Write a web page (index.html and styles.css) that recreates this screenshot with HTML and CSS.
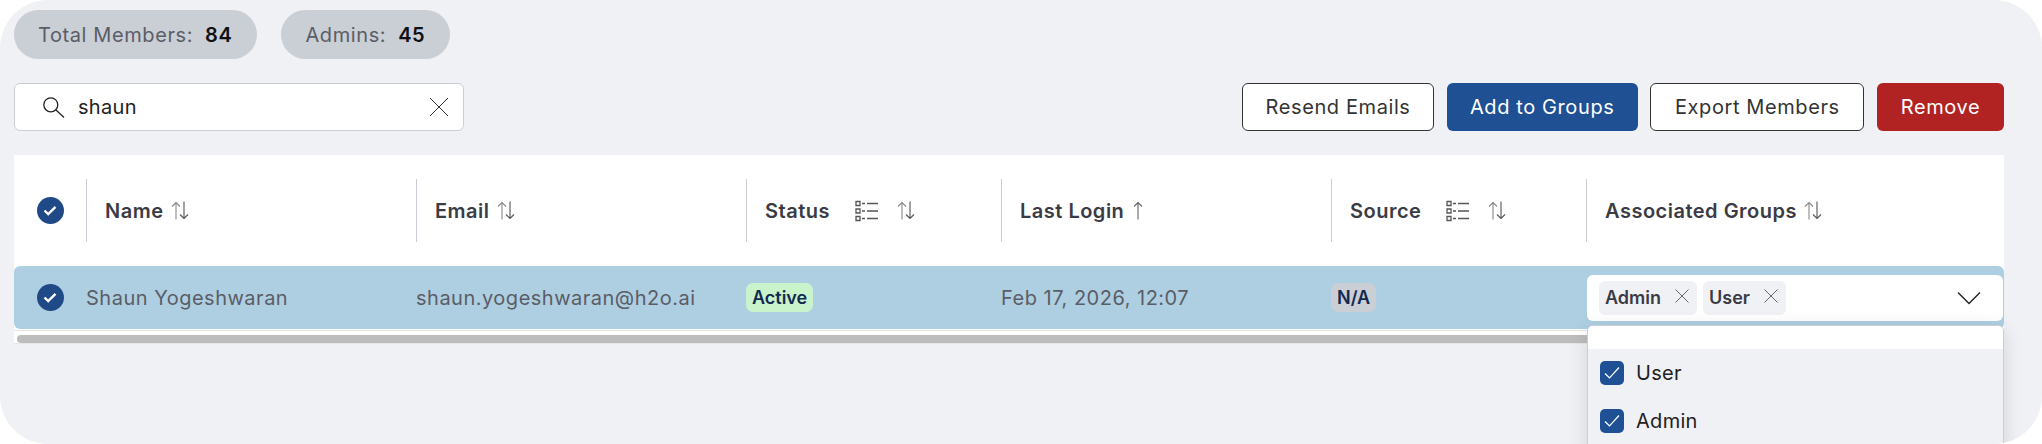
FILE: index.html
```html
<!DOCTYPE html>
<html>
<head>
    <meta charset="UTF-8">
    <title>Members</title>
    <link rel="stylesheet" href="styles.css">
</head>
<body>
    <div class="page">
        <!-- Counts -->
        <div class="stats">
            <div class="stat">Total Members: <b>84</b></div>
            <div class="stat">Admins: <b>45</b></div>
        </div>

        <!-- Search and actions -->
        <div class="toolbar">
            <div class="search">
                <svg class="search-icon" width="22" height="21" viewBox="0 0 22 21" fill="none" stroke="#222" stroke-width="1.3"><circle cx="7.8" cy="7.8" r="7"/><path d="M12.8 12.8 L21 20.5"/></svg>
                <span class="search-text">shaun</span>
                <svg width="20" height="20" viewBox="0 0 20 20" fill="none" stroke="#333" stroke-width="1"><path d="M1 1 L19 19 M19 1 L1 19"/></svg>
            </div>
            <div class="actions">
                <a class="btn btn-outline btn-resend">Resend Emails</a>
                <a class="btn btn-blue btn-add">Add to Groups</a>
                <a class="btn btn-outline btn-export">Export Members</a>
                <a class="btn btn-red btn-remove">Remove</a>
            </div>
        </div>

        <!-- Table -->
        <div class="table">
            <div class="head">
                <div class="cell check-cell">
                    <span class="round-check"><svg width="14" height="11" viewBox="0 0 14 11" fill="none" stroke="#fff" stroke-width="2.4"><path d="M1.5 5.5 L5.2 9 L12.5 1.8"/></svg></span>
                </div>
                <div class="cell head-cell">Name <svg class="sort" width="18" height="19" viewBox="0 0 18 19" fill="none" stroke-width="1.1"><path stroke="#888" d="M5 18.5 V1.5 M1 5.5 L5 1.5 L9 5.5"/><path stroke="#555" d="M13 0.5 V17.5 M9 13.5 L13 17.5 L17 13.5"/></svg></div>
                <div class="cell head-cell">Email <svg class="sort" width="18" height="19" viewBox="0 0 18 19" fill="none" stroke-width="1.1"><path stroke="#888" d="M5 18.5 V1.5 M1 5.5 L5 1.5 L9 5.5"/><path stroke="#555" d="M13 0.5 V17.5 M9 13.5 L13 17.5 L17 13.5"/></svg></div>
                <div class="cell head-cell">Status
                    <svg class="filter" width="24" height="22" viewBox="0 0 24 22" fill="none" stroke="#555" stroke-width="1.3"><path d="M1 1.5 H5 V5.5 H1 Z M1 9 H5 V13 H1 Z M1 16.5 H5 V20.5 H1 Z M7 3.5 H10 M12 3.5 H23 M7 11 H10 M12 11 H23 M7 18.5 H10 M12 18.5 H23"/></svg>
                    <svg class="sort sort-far" width="18" height="19" viewBox="0 0 18 19" fill="none" stroke-width="1.1"><path stroke="#888" d="M5 18.5 V1.5 M1 5.5 L5 1.5 L9 5.5"/><path stroke="#555" d="M13 0.5 V17.5 M9 13.5 L13 17.5 L17 13.5"/></svg>
                </div>
                <div class="cell head-cell">Last Login <svg class="sort sort-single" width="10" height="19" viewBox="0 0 10 19" fill="none" stroke="#666" stroke-width="1.1"><path d="M5 18.5 V1.5 M1 5.5 L5 1.5 L9 5.5"/></svg></div>
                <div class="cell head-cell">Source
                    <svg class="filter" width="24" height="22" viewBox="0 0 24 22" fill="none" stroke="#555" stroke-width="1.3"><path d="M1 1.5 H5 V5.5 H1 Z M1 9 H5 V13 H1 Z M1 16.5 H5 V20.5 H1 Z M7 3.5 H10 M12 3.5 H23 M7 11 H10 M12 11 H23 M7 18.5 H10 M12 18.5 H23"/></svg>
                    <svg class="sort sort-far" width="18" height="19" viewBox="0 0 18 19" fill="none" stroke-width="1.1"><path stroke="#888" d="M5 18.5 V1.5 M1 5.5 L5 1.5 L9 5.5"/><path stroke="#555" d="M13 0.5 V17.5 M9 13.5 L13 17.5 L17 13.5"/></svg>
                </div>
                <div class="cell head-cell">Associated Groups <svg class="sort" width="18" height="19" viewBox="0 0 18 19" fill="none" stroke-width="1.1"><path stroke="#888" d="M5 18.5 V1.5 M1 5.5 L5 1.5 L9 5.5"/><path stroke="#555" d="M13 0.5 V17.5 M9 13.5 L13 17.5 L17 13.5"/></svg></div>
            </div>
            <div class="row">
                <div class="cell check-cell">
                    <span class="round-check"><svg width="14" height="11" viewBox="0 0 14 11" fill="none" stroke="#fff" stroke-width="2.4"><path d="M1.5 5.5 L5.2 9 L12.5 1.8"/></svg></span>
                </div>
                <div class="cell">Shaun Yogeshwaran</div>
                <div class="cell">shaun.yogeshwaran@h2o.ai</div>
                <div class="cell badge-cell"><span class="badge badge-green">Active</span></div>
                <div class="cell">Feb 17, 2026, 12:07</div>
                <div class="cell badge-cell"><span class="badge badge-gray">N/A</span></div>
                <div class="cell groups-cell">
                    <div class="select">
                        <span class="tag">Admin <svg width="14" height="14" viewBox="0 0 14 14" fill="none" stroke="#666" stroke-width="1"><path d="M0.5 0.5 L13.5 13.5 M13.5 0.5 L0.5 13.5"/></svg></span>
                        <span class="tag">User <svg width="14" height="14" viewBox="0 0 14 14" fill="none" stroke="#666" stroke-width="1"><path d="M0.5 0.5 L13.5 13.5 M13.5 0.5 L0.5 13.5"/></svg></span>
                        <svg class="chevron" width="24" height="14" viewBox="0 0 24 14" fill="none" stroke="#222" stroke-width="1.4"><path d="M1 1.5 L12 12.5 L23 1.5"/></svg>
                    </div>
                    <div class="dropdown">
                        <div class="dropdown-search"></div>
                        <div class="dropdown-list">
                            <div class="option"><span class="box"><svg width="16" height="14" viewBox="0 0 16 14" fill="none" stroke="#fff" stroke-width="1.2"><path d="M1 7.5 L5.5 12 L15 1.5"/></svg></span>User</div>
                            <div class="option"><span class="box"><svg width="16" height="14" viewBox="0 0 16 14" fill="none" stroke="#fff" stroke-width="1.2"><path d="M1 7.5 L5.5 12 L15 1.5"/></svg></span>Admin</div>
                        </div>
                    </div>
                </div>
            </div>
            <div class="scrollbar"><div class="thumb"></div></div>
        </div>
    </div>
</body>
</html>
```

FILE: styles.css
```css
body {
    margin: 0;
    padding: 0;
    background-color: #fff;
    font-family: Inter, Arial, sans-serif;
    letter-spacing: 0.5px;
    overflow: hidden;
}

.page {
    height: 444px;
    box-sizing: border-box;
    padding: 10px 38px 0 14px;
    background-color: #f0f1f5;
    border-radius: 48px;
    overflow: hidden;
}

.stats {
    display: flex;
    gap: 24px;
}

.stat {
    height: 49px;
    padding: 0 25px 0 24px;
    display: flex;
    align-items: center;
    gap: 12px;
    background-color: #caced5;
    border-radius: 25px;
    color: #5b5d66;
    font-size: 20px;
    letter-spacing: 0.6px;
}

.stat b {
    color: #111;
    font-weight: 600;
}

.toolbar {
    display: flex;
    justify-content: space-between;
    margin-top: 24px;
}

.search {
    width: 450px;
    height: 48px;
    box-sizing: border-box;
    display: flex;
    align-items: center;
    padding: 0 14px 0 28px;
    background-color: #fff;
    border: 1px solid #c9ced6;
    border-radius: 6px;
    font-size: 20px;
    color: #222;
}

.search-text {
    flex: 1;
    margin-left: 13px;
    letter-spacing: 0.3px;
}

.actions {
    display: flex;
    gap: 12.67px;
}

.btn {
    height: 48px;
    box-sizing: border-box;
    display: flex;
    align-items: center;
    justify-content: center;
    border-radius: 6px;
    font-size: 20px;
    letter-spacing: 0.6px;
    color: #fff;
}

.btn-outline {
    background-color: #fff;
    border: 1px solid #333;
    color: #333;
}

.btn-blue {
    background-color: #1f5093;
}

.btn-red {
    background-color: #b12222;
}

.btn-resend { width: 192px; }
.btn-add { width: 191px; }
.btn-export { width: 214px; }
.btn-remove { width: 127px; }

.table {
    margin-top: 24px;
    background-color: #fff;
}

.head, .row {
    display: grid;
    grid-template-columns: 72px 330px 330px 255px 330px 255px 418px;
}

.head {
    height: 111px;
    padding-top: 24px;
    box-sizing: border-box;
    align-items: start;
}

.row {
    height: 63px;
    background-color: #aecfe2;
    border-radius: 6px;
    color: #5b5d66;
    font-size: 20px;
}

.cell {
    display: flex;
    align-items: center;
    min-width: 0;
    height: 63px;
    white-space: nowrap;
}

.head-cell {
    padding-left: 18px;
    border-left: 1px solid #c9ced6;
    color: #3a3b44;
    font-size: 20px;
    font-weight: 600;
}

.check-cell {
    justify-content: center;
}

.round-check {
    width: 27px;
    height: 27px;
    display: flex;
    align-items: center;
    justify-content: center;
    background-color: #1f4a87;
    border-radius: 50%;
}

.sort {
    margin-left: 7px;
}

.sort-single {
    margin-left: 9px;
}

.filter {
    margin-left: 25px;
}

.sort-far {
    margin-left: 18px;
}

.badge {
    padding: 4px 6px;
    border-radius: 7px;
    color: #12294f;
    font-size: 18px;
    font-weight: 600;
    letter-spacing: 0;
}

.badge-green {
    background-color: #c9f3cb;
}

.badge-gray {
    background-color: #caced5;
}

.groups-cell {
    position: relative;
}

.select {
    width: 416px;
    height: 46px;
    margin-left: 1px;
    box-sizing: border-box;
    display: flex;
    align-items: center;
    gap: 6px;
    padding: 0 22px 0 12px;
    background-color: #fff;
    border-radius: 6px;
}

.tag {
    height: 34px;
    display: flex;
    align-items: center;
    gap: 14px;
    padding: 0 8px 0 6px;
    background-color: #f0f1f5;
    border-radius: 6px;
    color: #3a3b44;
    font-size: 18px;
    font-weight: 600;
    letter-spacing: 0;
}

.tag svg {
    margin-bottom: 4px;
}

.chevron {
    margin-left: auto;
}

.dropdown {
    position: absolute;
    left: 1px;
    top: 59px;
    width: 417px;
    box-sizing: border-box;
    background-color: #f0f1f5;
    border: 1px solid #c9ced6;
    border-radius: 6px;
    box-shadow: 0 4px 20px rgba(0, 0, 0, 0.12);
    overflow: hidden;
}

.dropdown-search {
    height: 23px;
    background-color: #fff;
}

.dropdown-list {
    padding: 0 12px 20px;
}

.option {
    height: 48px;
    display: flex;
    align-items: center;
    gap: 12px;
    color: #222;
    font-size: 20px;
    letter-spacing: 0.3px;
}

.box {
    width: 24px;
    height: 24px;
    display: flex;
    align-items: center;
    justify-content: center;
    background-color: #1f5093;
    border-radius: 5px;
}

.scrollbar {
    height: 14px;
    margin-top: 1px;
    padding: 4px 3px 0;
    box-sizing: border-box;
    background-color: #fff;
    border-top: 1px solid #e6e6e6;
    border-bottom: 1px solid #e6e6e6;
}

.thumb {
    height: 8px;
    background-color: #bdbdbd;
    border-radius: 4px;
}
```
